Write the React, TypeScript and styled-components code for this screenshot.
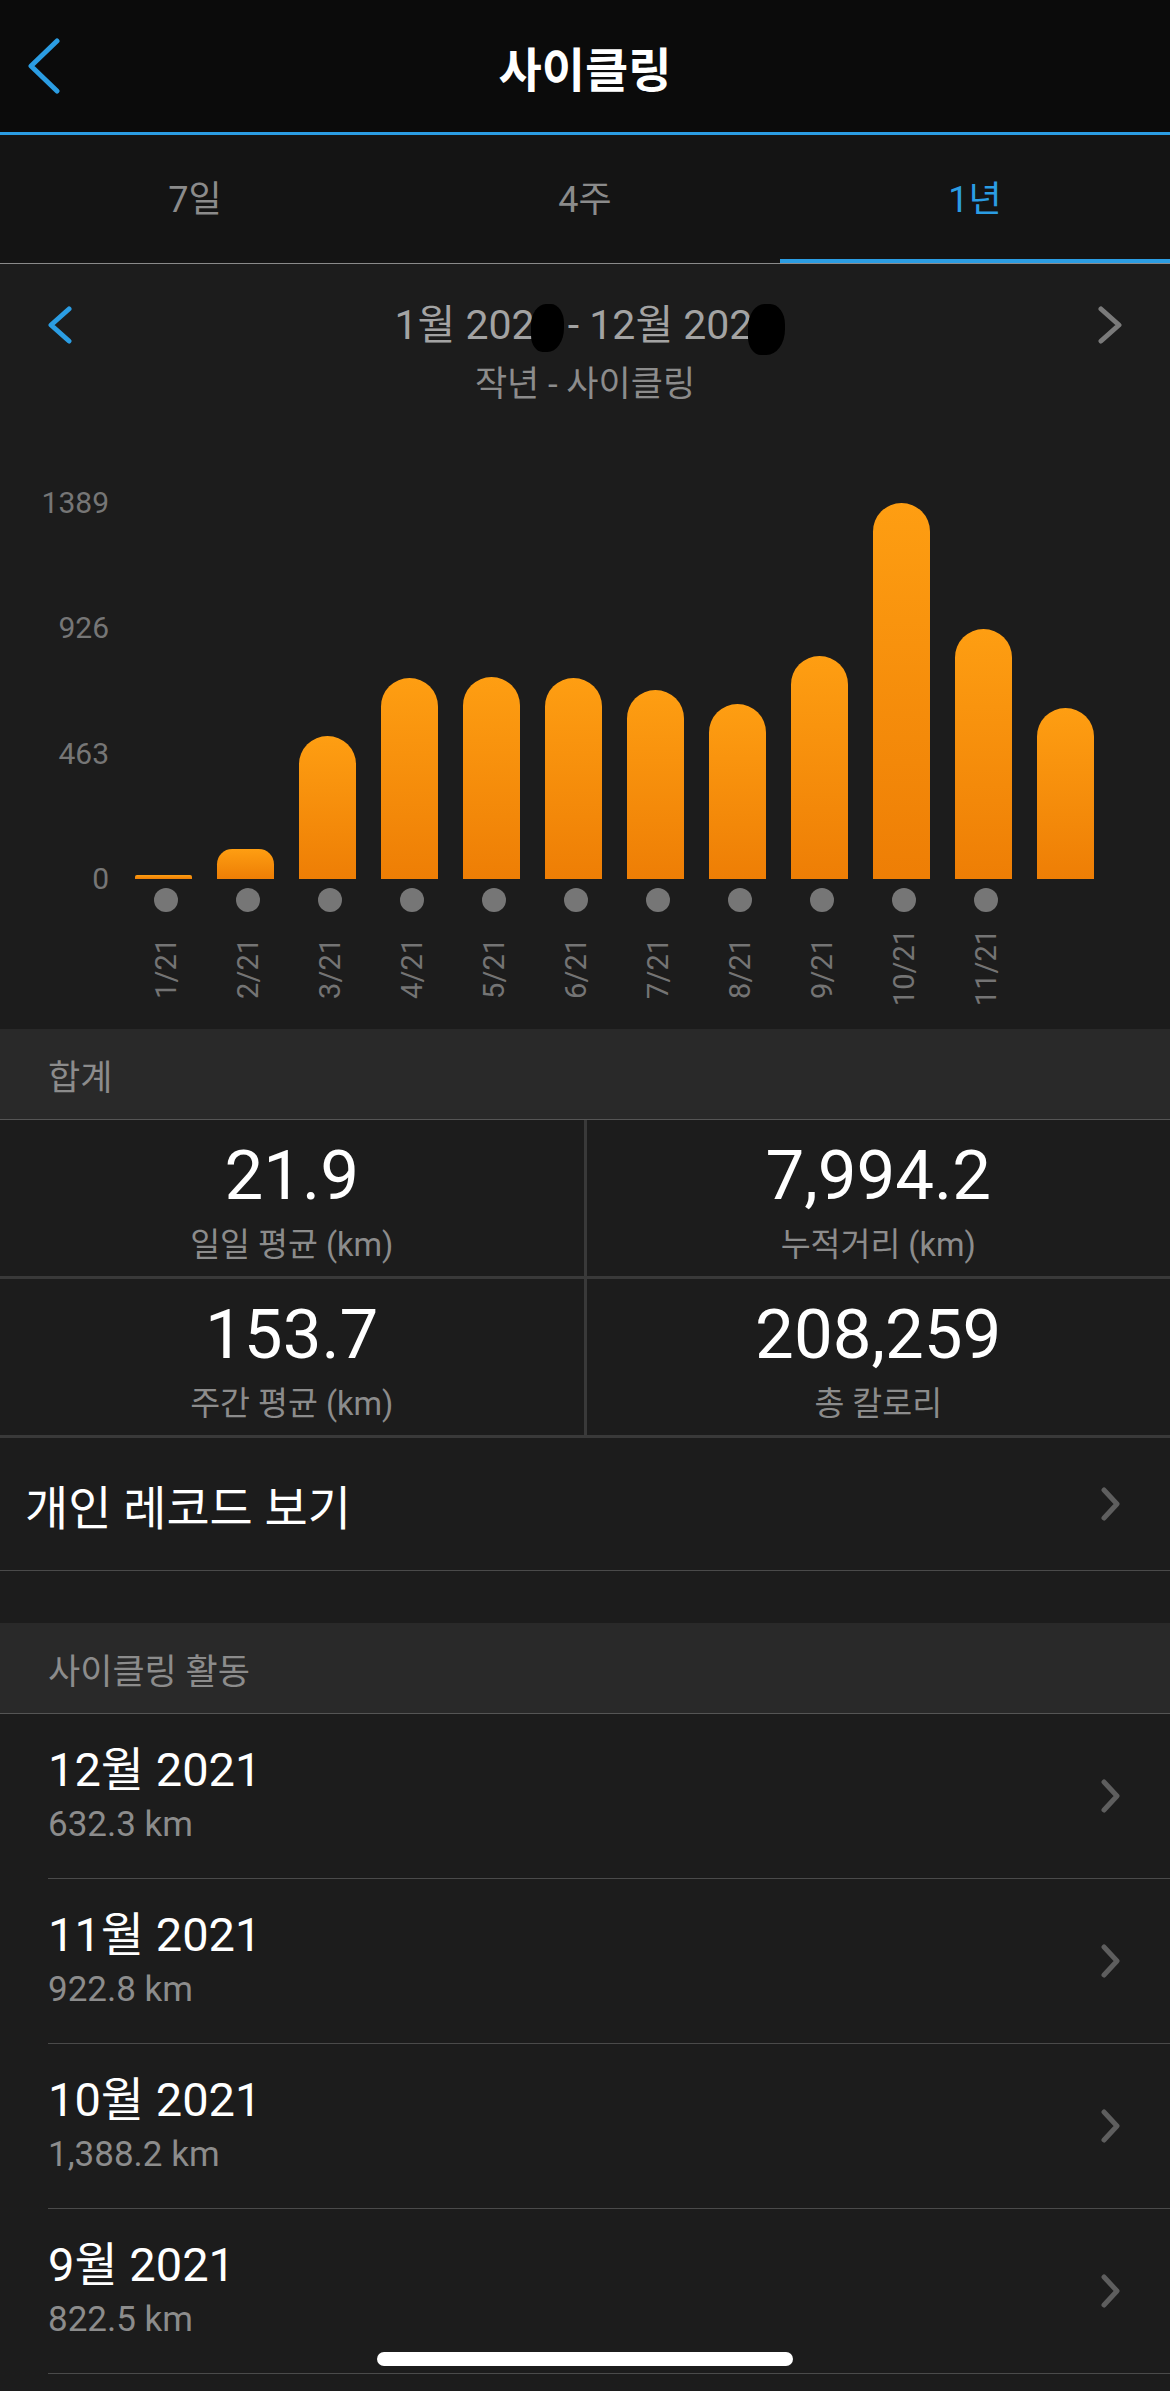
import styled, { createGlobalStyle } from "styled-components";

const BLUE = "#2b9de3";
const MAX = 1389;
const PLOT_H = 376;

const months = [
  { label: "1/21", value: 15 },
  { label: "2/21", value: 112 },
  { label: "3/21", value: 527 },
  { label: "4/21", value: 741 },
  { label: "5/21", value: 748 },
  { label: "6/21", value: 741 },
  { label: "7/21", value: 700 },
  { label: "8/21", value: 646 },
  { label: "9/21", value: 822.5 },
  { label: "10/21", value: 1388.2 },
  { label: "11/21", value: 922.8 },
  { label: "12/21", value: 632.3, current: true },
];

const stats = [
  { value: "21.9", label: "일일 평균 (km)" },
  { value: "7,994.2", label: "누적거리 (km)" },
  { value: "153.7", label: "주간 평균 (km)" },
  { value: "208,259", label: "총 칼로리" },
];

const activities = [
  { title: "12월 2021", dist: "632.3 km" },
  { title: "11월 2021", dist: "922.8 km" },
  { title: "10월 2021", dist: "1,388.2 km" },
  { title: "9월 2021", dist: "822.5 km" },
];

type ChevronProps = { w: number; h: number; color: string; stroke: number; left?: boolean };

const Chevron = ({ w, h, color, stroke, left }: ChevronProps) => {
  const p = stroke / 2 + 0.5;
  const d = left
    ? `M ${w - p} ${p} L ${p} ${h / 2} L ${w - p} ${h - p}`
    : `M ${p} ${p} L ${w - p} ${h / 2} L ${p} ${h - p}`;
  return (
    <svg width={w} height={h} viewBox={`0 0 ${w} ${h}`} fill="none">
      <path d={d} stroke={color} strokeWidth={stroke} strokeLinecap="round" strokeLinejoin="round" />
    </svg>
  );
};

const App = () => {
  return (
    <Page>
      <GlobalStyle />
      <Header>
        <BackBtn>
          <Chevron w={32} h={56} color={BLUE} stroke={5} left />
        </BackBtn>
        <Title>사이클링</Title>
        <div />
      </Header>

      <Tabs>
        <Tab>7일</Tab>
        <Tab>4주</Tab>
        <Tab $active>1년</Tab>
      </Tabs>

      <DateNav>
        <NavRow>
          <NavLeft>
            <Chevron w={24} h={38} color={BLUE} stroke={5} left />
          </NavLeft>
          <RangeText>
            1월 202<Redacted>1</Redacted> - 12월 202<Redacted $big>1</Redacted>
          </RangeText>
          <NavRight>
            <Chevron w={24} h={38} color="#7a7a7a" stroke={5} />
          </NavRight>
        </NavRow>
        <RangeSub>작년 - 사이클링</RangeSub>
      </DateNav>

      <Chart>
        <Axis>
          <span>1389</span>
          <span>926</span>
          <span>463</span>
          <span>0</span>
        </Axis>
        <Columns>
          {months.map((m) => {
            const h = Math.max(4, (m.value / MAX) * PLOT_H);
            const r = Math.min(28.5, h / 2);
            return (
              <Col key={m.label}>
                <BarSlot>
                  <Bar style={{ height: h, borderRadius: `${r}px ${r}px 0 0` }} />
                </BarSlot>
                <Dot $hidden={m.current} />
                <XLabelBox>{!m.current && <XLabel>{m.label}</XLabel>}</XLabelBox>
              </Col>
            );
          })}
        </Columns>
      </Chart>

      <SectionHeader>합계</SectionHeader>
      <StatsGrid>
        {stats.map((s) => (
          <StatCell key={s.label}>
            <StatValue>{s.value}</StatValue>
            <StatLabel>{s.label}</StatLabel>
          </StatCell>
        ))}
      </StatsGrid>

      <RecordRow>
        <span>개인 레코드 보기</span>
        <Chevron w={19} h={34} color="#5e5e5e" stroke={5} />
      </RecordRow>

      <Spacer />

      <SectionHeader>사이클링 활동</SectionHeader>
      {activities.map((a) => (
        <ListRow key={a.title}>
          <RowText>
            <RowTitle>{a.title}</RowTitle>
            <RowSub>{a.dist}</RowSub>
          </RowText>
          <Chevron w={19} h={34} color="#5e5e5e" stroke={5} />
        </ListRow>
      ))}

      <HomeIndicator />
    </Page>
  );
};

const GlobalStyle = createGlobalStyle`
  html, body {
    margin: 0;
    padding: 0;
    background: #1c1c1c;
  }
  body {
    font-family: "Roboto", "Noto Sans CJK KR", sans-serif;
    color: #fff;
  }
  * {
    box-sizing: border-box;
  }
`;

const Page = styled.div`
  position: relative;
  min-height: 2391px;
  background: #1c1c1c;
  overflow: hidden;
`;

const Header = styled.div`
  height: 135px;
  background: #0b0b0b;
  border-bottom: 3px solid ${BLUE};
  display: grid;
  grid-template-columns: 140px 1fr 140px;
  align-items: center;
`;

const BackBtn = styled.div`
  padding-left: 28px;
  display: flex;
  align-items: center;
`;

const Title = styled.div`
  text-align: center;
  font-size: 47px;
  font-weight: 700;
  color: #fff;
`;

const Tabs = styled.div`
  height: 129px;
  background: #141414;
  border-bottom: 1px solid #8a8a8a;
  display: grid;
  grid-template-columns: 1fr 1fr 1fr;
`;

const Tab = styled.div<{ $active?: boolean }>`
  display: flex;
  align-items: center;
  justify-content: center;
  padding-bottom: 6px;
  font-size: 36px;
  color: ${(p) => (p.$active ? BLUE : "#8b8b8b")};
  box-shadow: ${(p) => (p.$active ? `inset 0 -4px 0 ${BLUE}` : "none")};
`;

const DateNav = styled.div`
  padding-top: 36px;
`;

const NavRow = styled.div`
  display: grid;
  grid-template-columns: 120px 1fr 120px;
  align-items: center;
  height: 50px;
`;

const NavLeft = styled.div`
  padding-left: 48px;
  display: flex;
`;

const NavRight = styled.div`
  padding-right: 48px;
  display: flex;
  justify-content: flex-end;
`;

const RangeText = styled.div`
  text-align: center;
  font-size: 41px;
  line-height: 50px;
  color: #a3a3a3;
`;

const Redacted = styled.span<{ $big?: boolean }>`
  position: relative;
  &::after {
    content: "";
    position: absolute;
    left: -4px;
    right: ${(p) => (p.$big ? "-10px" : "-6px")};
    top: 3px;
    bottom: ${(p) => (p.$big ? "-6px" : "-3px")};
    background: #000;
    border-radius: 45% 40% 50% 35%;
  }
`;

const RangeSub = styled.div`
  margin-top: 15px;
  text-align: center;
  font-size: 35px;
  line-height: 40px;
  color: #8c8c8c;
`;

const Chart = styled.div`
  display: flex;
  align-items: flex-start;
  padding: 83px 0 21px;
`;

const Axis = styled.div`
  width: 109px;
  height: 406px;
  display: flex;
  flex-direction: column;
  justify-content: space-between;
  align-items: flex-end;
  font-size: 30px;
  line-height: 30px;
  color: #767676;
`;

const Columns = styled.div`
  display: flex;
  margin-top: 15px;
  margin-left: 16px;
`;

const Col = styled.div`
  width: 82px;
  display: flex;
  flex-direction: column;
  align-items: center;
`;

const BarSlot = styled.div`
  height: ${PLOT_H}px;
  display: flex;
  align-items: flex-end;
  margin-right: 5px;
`;

const Bar = styled.div`
  width: 57px;
  background: linear-gradient(to bottom, #fe9e12, #ee7e05);
`;

const Dot = styled.div<{ $hidden?: boolean }>`
  width: 24px;
  height: 24px;
  margin-top: 9px;
  border-radius: 50%;
  background: #767676;
  visibility: ${(p) => (p.$hidden ? "hidden" : "visible")};
`;

const XLabelBox = styled.div`
  margin-top: 16px;
  height: 80px;
  display: flex;
  align-items: center;
  justify-content: center;
`;

const XLabel = styled.span`
  writing-mode: vertical-rl;
  transform: rotate(180deg);
  font-size: 29px;
  line-height: 1;
  color: #747474;
`;

const SectionHeader = styled.div`
  height: 91px;
  background: #292929;
  border-bottom: 1px solid #555;
  padding-left: 48px;
  display: flex;
  align-items: center;
  font-size: 35px;
  color: #8c8c8c;
`;

const StatsGrid = styled.div`
  display: grid;
  grid-template-columns: 1fr 1fr;
  gap: 3px;
  background: #393939;
  border-bottom: 3px solid #393939;
`;

const StatCell = styled.div`
  height: 156px;
  padding-top: 21px;
  background: #1c1c1c;
  text-align: center;
`;

const StatValue = styled.div`
  font-size: 69px;
  line-height: 70px;
  color: #fff;
`;

const StatLabel = styled.div`
  margin-top: 16px;
  font-size: 32.5px;
  line-height: 36px;
  color: #8c8c8c;
`;

const RecordRow = styled.div`
  height: 133px;
  border-bottom: 1px solid #4a4a4a;
  padding: 0 50px 0 25px;
  display: flex;
  align-items: center;
  justify-content: space-between;
  font-size: 47px;
  color: #fff;
`;

const Spacer = styled.div`
  height: 52px;
`;

const ListRow = styled.div`
  margin-left: 48px;
  height: 165px;
  border-bottom: 1px solid #4a4a4a;
  padding-right: 50px;
  display: flex;
  align-items: center;
  justify-content: space-between;
`;

const RowText = styled.div`
  display: flex;
  flex-direction: column;
`;

const RowTitle = styled.div`
  font-size: 47px;
  line-height: 46px;
  color: #fff;
`;

const RowSub = styled.div`
  margin-top: 12px;
  font-size: 35px;
  line-height: 40px;
  color: #8c8c8c;
`;

const HomeIndicator = styled.div`
  position: absolute;
  left: 50%;
  bottom: 25px;
  transform: translateX(-50%);
  width: 416px;
  height: 14px;
  border-radius: 7px;
  background: #fff;
`;

export default App;
